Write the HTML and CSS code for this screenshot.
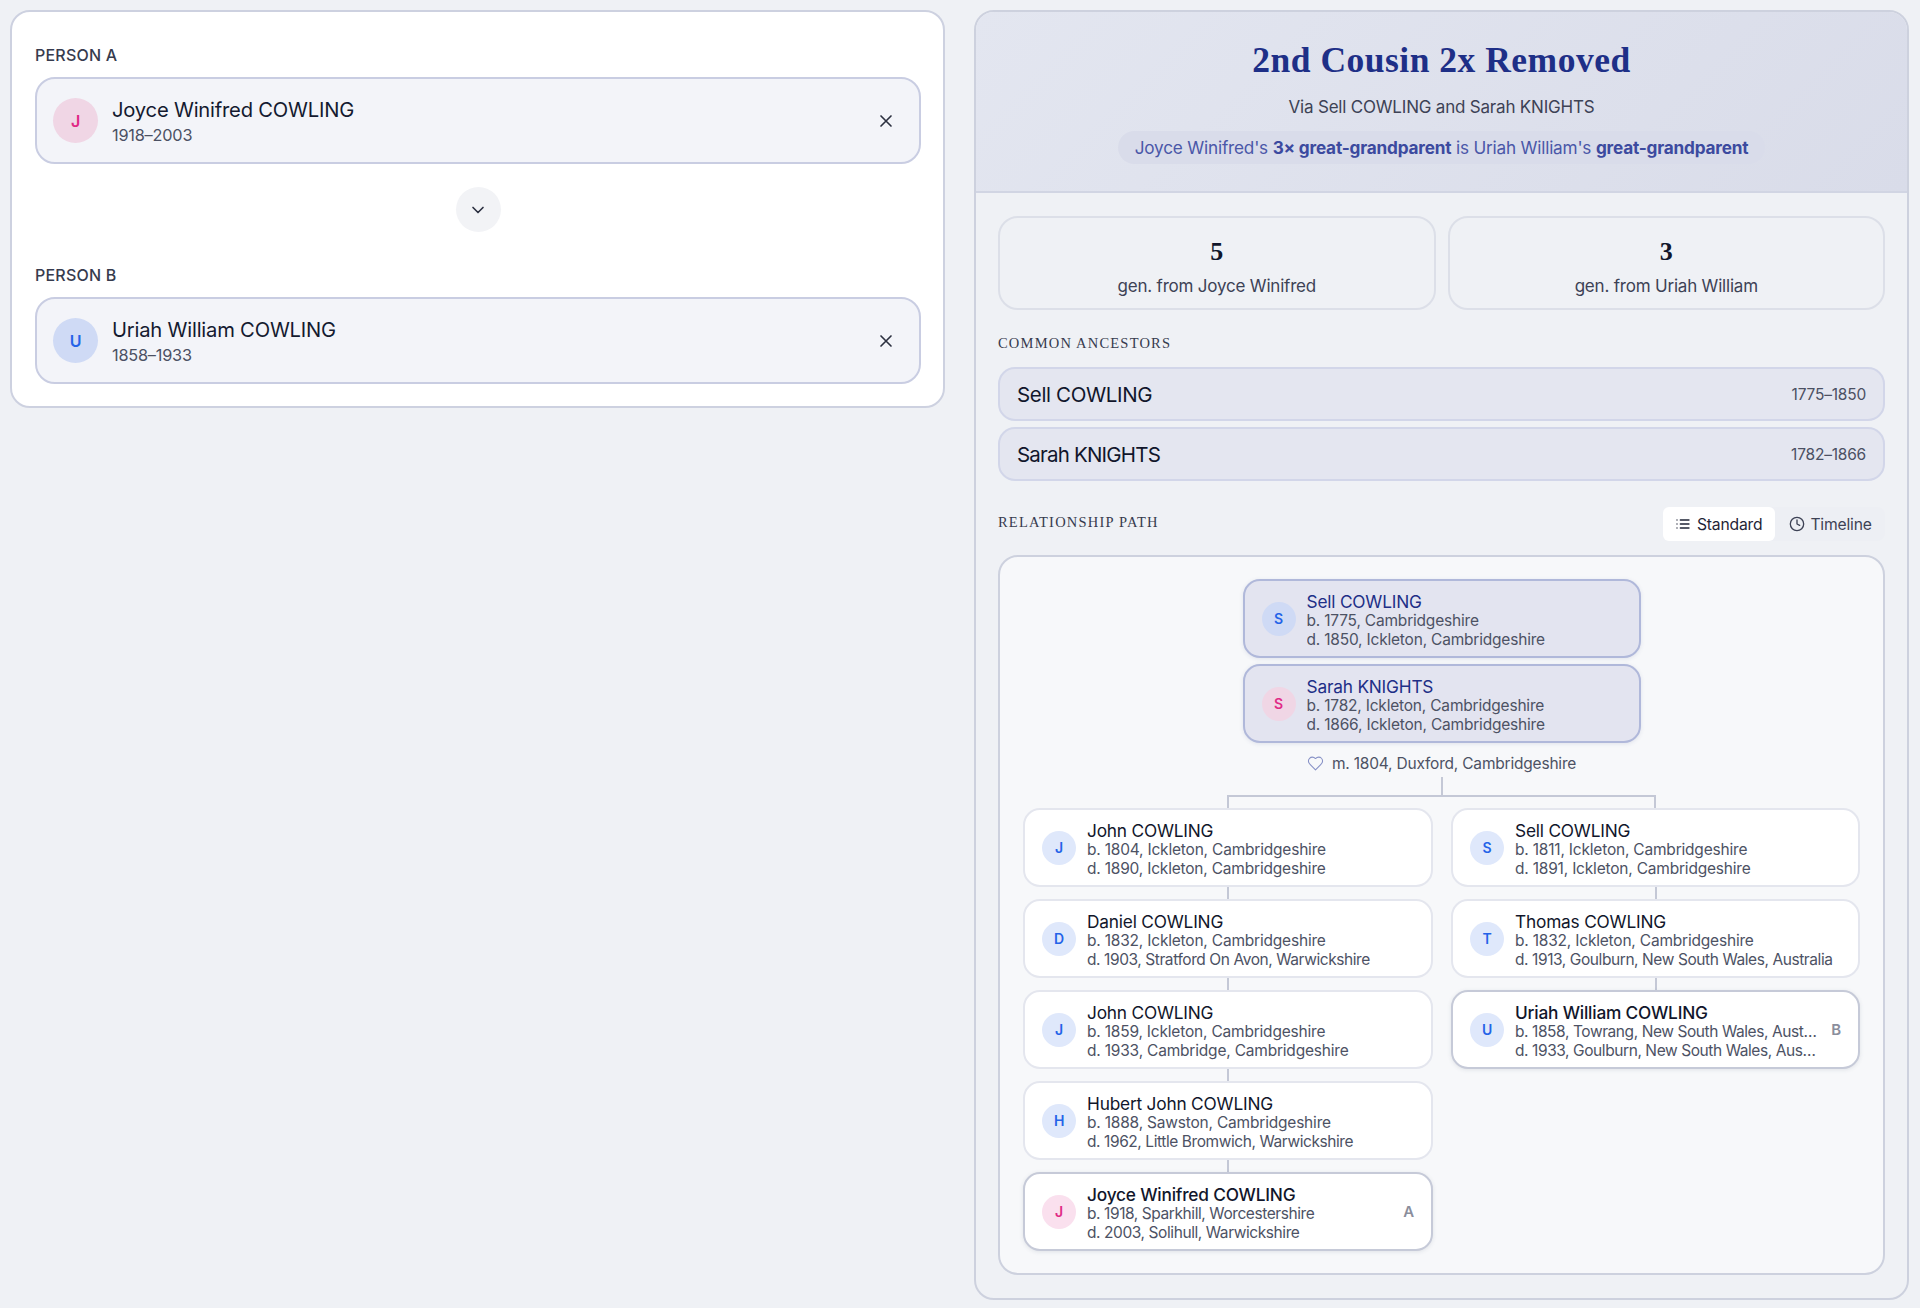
FILE: index.html
```html
<!DOCTYPE html>
<html lang="en">
  <head>
    <meta charset="UTF-8" />
    <meta name="viewport" content="width=device-width, initial-scale=1.0" />
    <title>Relationship Finder</title>
    <link rel="stylesheet" href="styles.css">
  </head>
  <body>
    <div class="layout">
      <section class="picker">
        <div class="field-label">PERSON A</div>
        <div class="person-box">
          <div class="avatar avatar-lg pink">J</div>
          <div class="person-text">
            <div class="person-name">Joyce Winifred COWLING</div>
            <div class="person-dates">1918–2003</div>
          </div>
          <svg class="clear-icon" viewBox="0 0 24 24"><path d="M18 6 6 18M6 6l12 12" /></svg>
        </div>

        <div class="swap-row">
          <div class="swap-btn">
            <svg viewBox="0 0 24 24"><path d="m6 9 6 6 6-6" /></svg>
          </div>
        </div>

        <div class="field-label">PERSON B</div>
        <div class="person-box">
          <div class="avatar avatar-lg blue">U</div>
          <div class="person-text">
            <div class="person-name">Uriah William COWLING</div>
            <div class="person-dates">1858–1933</div>
          </div>
          <svg class="clear-icon" viewBox="0 0 24 24"><path d="M18 6 6 18M6 6l12 12" /></svg>
        </div>
      </section>

      <section class="result">
        <header class="result-head">
          <h1>2nd Cousin 2x Removed</h1>
          <p class="via">Via Sell COWLING and Sarah KNIGHTS</p>
          <p class="pill">Joyce Winifred's <b>3× great-grandparent</b> is Uriah William's <b>great-grandparent</b></p>
        </header>

        <div class="result-body">
          <div class="stats">
            <div class="stat">
              <div class="stat-num">5</div>
              <div class="stat-label">gen. from Joyce Winifred</div>
            </div>
            <div class="stat">
              <div class="stat-num">3</div>
              <div class="stat-label">gen. from Uriah William</div>
            </div>
          </div>

          <h2 class="section-title">COMMON ANCESTORS</h2>
          <div class="ancestors">
            <div class="ancestor"><span class="ancestor-name">Sell COWLING</span><span class="ancestor-dates">1775–1850</span></div>
            <div class="ancestor"><span class="ancestor-name tight">Sarah KNIGHTS</span><span class="ancestor-dates">1782–1866</span></div>
          </div>

          <div class="path-head">
            <h2 class="section-title">RELATIONSHIP PATH</h2>
            <div class="toggle">
              <div class="toggle-btn active">
                <svg viewBox="0 0 24 24"><path d="M3 6h.01M3 12h.01M3 18h.01M8 6h13M8 12h13M8 18h13" /></svg>
                Standard
              </div>
              <div class="toggle-btn">
                <svg viewBox="0 0 24 24"><circle cx="12" cy="12" r="10" /><path d="M12 6v6l4 2" /></svg>
                Timeline
              </div>
            </div>
          </div>

          <div class="tree">
            <div class="couple">
              <div class="node root">
                <div class="avatar blue">S</div>
                <div class="node-text">
                  <div class="node-name">Sell COWLING</div>
                  <div class="node-line">b. 1775, Cambridgeshire</div>
                  <div class="node-line">d. 1850, Ickleton, Cambridgeshire</div>
                </div>
              </div>
              <div class="node root">
                <div class="avatar pink">S</div>
                <div class="node-text">
                  <div class="node-name">Sarah KNIGHTS</div>
                  <div class="node-line">b. 1782, Ickleton, Cambridgeshire</div>
                  <div class="node-line">d. 1866, Ickleton, Cambridgeshire</div>
                </div>
              </div>
              <div class="marriage">
                <svg viewBox="0 0 24 24"><path d="M19 14c1.500-1.500 3-3.200 3-5.500A5.500 5.500 0 0 0 16.500 3c-1.800 0-3 .5-4.500 2-1.500-1.500-2.700-2-4.500-2A5.500 5.500 0 0 0 2 8.500c0 2.300 1.500 4 3 5.500l7 7Z" /></svg>
                m. 1804, Duxford, Cambridgeshire
              </div>
            </div>

            <div class="stem"></div>
            <div class="fork"></div>

            <div class="branches">
              <div class="branch">
                <div class="node">
                  <div class="avatar blue-soft">J</div>
                  <div class="node-text">
                    <div class="node-name">John COWLING</div>
                    <div class="node-line">b. 1804, Ickleton, Cambridgeshire</div>
                    <div class="node-line">d. 1890, Ickleton, Cambridgeshire</div>
                  </div>
                </div>
                <div class="link"></div>
                <div class="node">
                  <div class="avatar blue-soft">D</div>
                  <div class="node-text">
                    <div class="node-name">Daniel COWLING</div>
                    <div class="node-line">b. 1832, Ickleton, Cambridgeshire</div>
                    <div class="node-line tight">d. 1903, Stratford On Avon, Warwickshire</div>
                  </div>
                </div>
                <div class="link"></div>
                <div class="node">
                  <div class="avatar blue-soft">J</div>
                  <div class="node-text">
                    <div class="node-name">John COWLING</div>
                    <div class="node-line">b. 1859, Ickleton, Cambridgeshire</div>
                    <div class="node-line">d. 1933, Cambridge, Cambridgeshire</div>
                  </div>
                </div>
                <div class="link"></div>
                <div class="node">
                  <div class="avatar blue-soft">H</div>
                  <div class="node-text">
                    <div class="node-name">Hubert John COWLING</div>
                    <div class="node-line">b. 1888, Sawston, Cambridgeshire</div>
                    <div class="node-line tight">d. 1962, Little Bromwich, Warwickshire</div>
                  </div>
                </div>
                <div class="link"></div>
                <div class="node endpoint">
                  <div class="avatar pink-soft">J</div>
                  <div class="node-text">
                    <div class="node-name">Joyce Winifred COWLING</div>
                    <div class="node-line tight">b. 1918, Sparkhill, Worcestershire</div>
                    <div class="node-line tight">d. 2003, Solihull, Warwickshire</div>
                  </div>
                  <div class="node-tag">A</div>
                </div>
              </div>

              <div class="branch">
                <div class="node">
                  <div class="avatar blue-soft">S</div>
                  <div class="node-text">
                    <div class="node-name">Sell COWLING</div>
                    <div class="node-line">b. 1811, Ickleton, Cambridgeshire</div>
                    <div class="node-line">d. 1891, Ickleton, Cambridgeshire</div>
                  </div>
                </div>
                <div class="link"></div>
                <div class="node">
                  <div class="avatar blue-soft">T</div>
                  <div class="node-text">
                    <div class="node-name">Thomas COWLING</div>
                    <div class="node-line">b. 1832, Ickleton, Cambridgeshire</div>
                    <div class="node-line tight">d. 1913, Goulburn, New South Wales, Australia</div>
                  </div>
                </div>
                <div class="link"></div>
                <div class="node endpoint">
                  <div class="avatar blue-soft">U</div>
                  <div class="node-text">
                    <div class="node-name">Uriah William COWLING</div>
                    <div class="node-line tight">b. 1858, Towrang, New South Wales, Australia</div>
                    <div class="node-line tight">d. 1933, Goulburn, New South Wales, Australia</div>
                  </div>
                  <div class="node-tag">B</div>
                </div>
              </div>
            </div>
          </div>
        </div>
      </section>
    </div>
  </body>
</html>
```

FILE: styles.css
```css
* {
  box-sizing: border-box;
  margin: 0;
}

body {
  background-color: #eff1f5;
  color: #11162b;
  font-family: Inter, "Liberation Sans", sans-serif;
  letter-spacing: -0.2px;
}

svg {
  fill: none;
  stroke: currentColor;
  stroke-width: 2;
  stroke-linecap: round;
  stroke-linejoin: round;
}

.layout {
  display: flex;
  align-items: flex-start;
  gap: 29px;
  padding: 10px 11px 8px 10px;
}

/* left column */
.picker {
  width: 935px;
  height: 398px;
  background-color: #fff;
  border: 2px solid #cdd1e0;
  border-radius: 20px;
  padding: 33px 22px 0 23px;
}

.field-label {
  font-size: 16px;
  line-height: 20px;
  font-weight: 500;
  letter-spacing: 0.2px;
  color: #363b4e;
  margin-bottom: 12px;
}

.person-box {
  display: flex;
  align-items: center;
  height: 87px;
  padding: 0 23px 0 16px;
  background-color: #f3f4f9;
  border: 2px solid #c9cde2;
  border-radius: 20px;
}

.person-text {
  flex: 1;
  margin-left: 14px;
  padding-top: 2px;
}

.person-name {
  font-size: 20.200px;
  line-height: 27px;
  color: #141a30;
}

.person-dates {
  font-size: 16.300px;
  line-height: 25px;
  color: #4b5063;
}

.clear-icon {
  width: 20px;
  height: 20px;
  color: #2c3040;
}

.swap-row {
  display: flex;
  justify-content: center;
  margin: 23px 0 33px;
}

.swap-btn {
  width: 45px;
  height: 45px;
  border-radius: 50%;
  background-color: #f2f3f6;
  color: #2c3040;
  display: flex;
  align-items: center;
  justify-content: center;
}

.swap-btn svg {
  width: 20px;
  height: 20px;
}

/* avatars */
.avatar {
  flex: none;
  width: 34px;
  height: 34px;
  border-radius: 50%;
  display: flex;
  align-items: center;
  justify-content: center;
  font-size: 14px;
  font-weight: 600;
}

.avatar-lg {
  width: 45px;
  height: 45px;
  font-size: 16px;
}

.pink {
  background-color: #f0d6e5;
  color: #e02a85;
}

.blue {
  background-color: #cfdaf5;
  color: #2463e8;
}

.pink-soft {
  background-color: #fae0ee;
  color: #e02a85;
}

.blue-soft {
  background-color: #dfe8fb;
  color: #2463e8;
}

/* right column */
.result {
  width: 935px;
  height: 1290px;
  border: 2px solid #cdd1de;
  border-radius: 20px;
  overflow: hidden;
}

.result-head {
  height: 181px;
  padding-top: 24px;
  text-align: center;
  background: linear-gradient(135deg, #e3e6f0, #d9dce9);
  border-bottom: 2px solid #d1d5e3;
}

.result-head h1 {
  font-family: "Liberation Serif", serif;
  font-size: 35.500px;
  line-height: 48px;
  font-weight: 700;
  letter-spacing: 0.5px;
  color: #1e2f87;
}

.via {
  margin-top: 11px;
  font-size: 17px;
  line-height: 24px;
  color: #3d4255;
}

.pill {
  display: inline-block;
  margin-top: 12px;
  height: 33px;
  padding: 0 17px;
  border-radius: 17px;
  background-color: #d9dcea;
  font-size: 17.200px;
  line-height: 34px;
  color: #4a57a8;
}

.pill b {
  font-weight: 700;
  color: #3c4a9f;
}

.result-body {
  padding: 23px 22px 0;
}

.stats {
  display: grid;
  grid-template-columns: 1fr 1fr;
  gap: 12px;
}

.stat {
  height: 94px;
  padding-top: 18px;
  text-align: center;
  border: 2px solid #dcdfe8;
  border-radius: 20px;
}

.stat-num {
  font-family: "Liberation Serif", serif;
  font-size: 26px;
  line-height: 32px;
  font-weight: 700;
}

.stat-label {
  margin-top: 6px;
  font-size: 17px;
  line-height: 24px;
  color: #3d4255;
}

.section-title {
  font-family: "Liberation Serif", serif;
  font-size: 14.500px;
  font-weight: 400;
  letter-spacing: 1.200px;
  color: #363b4e;
}

.result-body > .section-title {
  margin-top: 24px;
  line-height: 18px;
}

.ancestors {
  display: flex;
  flex-direction: column;
  gap: 6px;
  margin-top: 15px;
}

.ancestor {
  display: flex;
  justify-content: space-between;
  align-items: center;
  height: 54px;
  padding: 0 17px;
  background-color: #e4e6f0;
  border: 2px solid #d2d6e9;
  border-radius: 17px;
}

.ancestor-name {
  font-size: 20.500px;
  letter-spacing: -0.35px;
}

.ancestor-name.tight {
  letter-spacing: -0.8px;
}

.ancestor-dates {
  font-size: 15.500px;
  color: #4b5063;
}

.path-head {
  display: flex;
  justify-content: space-between;
  align-items: center;
  margin-top: 26px;
}

.path-head .section-title {
  margin-bottom: 4px;
}

.toggle {
  display: flex;
  gap: 2px;
  width: 222px;
  border-radius: 8px;
  background-color: #edeff4;
}

.toggle-btn {
  display: flex;
  align-items: center;
  gap: 5px;
  height: 34px;
  padding: 0 11px 0 12px;
  font-size: 15.700px;
  color: #3d4255;
  border-radius: 6px;
}

.toggle-btn.active {
  gap: 6px;
  padding-right: 13px;
  background-color: #fff;
  color: #1f2436;
}

.toggle-btn svg {
  width: 16px;
  height: 16px;
}

.tree {
  height: 720px;
  margin-top: 14px;
  padding: 22px 23px 0;
  background-color: #f7f8fa;
  border: 2px solid #cdd1de;
  border-radius: 20px;
}

.couple {
  width: 398px;
  margin: 0 auto;
  display: flex;
  flex-direction: column;
  gap: 6px;
}

.node {
  display: flex;
  align-items: center;
  height: 79px;
  padding: 0 8px 0 17px;
  background-color: #fff;
  border: 2px solid #e4e6ee;
  border-radius: 17px;
}

.node.root {
  background-color: #e3e4f0;
  border-color: #b0b8da;
  box-shadow: 0 1px 4px rgba(60, 70, 130, 0.12);
}

.node.endpoint {
  padding-right: 17px;
  border-color: #c6cad8;
  box-shadow: 0 1px 4px rgba(60, 70, 100, 0.12);
}

.node-text {
  flex: 1;
  min-width: 0;
  margin-left: 11px;
  padding-top: 3px;
}

.node-name {
  font-size: 17.300px;
  line-height: 21px;
  color: #11162b;
}

.endpoint .node-name {
  font-weight: 500;
}

.root .node-name {
  color: #1e2f87;
}

.node-line {
  font-size: 15.500px;
  line-height: 18.500px;
  color: #4d5264;
  white-space: nowrap;
  overflow: hidden;
  text-overflow: ellipsis;
}

.node-line.tight {
  letter-spacing: -0.42px;
}

.node-tag {
  flex: none;
  margin-left: 14px;
  font-size: 15px;
  font-weight: 600;
  color: #8a8e9c;
}

.marriage {
  display: flex;
  align-items: center;
  justify-content: center;
  gap: 8px;
  height: 26px;
  margin-top: 1px;
  font-size: 15.500px;
  color: #4d5264;
}

.marriage svg {
  width: 17px;
  height: 17px;
  stroke-width: 1.500;
  color: #8791c6;
}

.stem {
  width: 2px;
  height: 18px;
  margin: 1px auto 0;
  background-color: #c4c8d6;
}

.fork {
  width: 429px;
  height: 13px;
  margin: 0 auto;
  border: 2px solid #c4c8d6;
  border-bottom: 0;
}

.branches {
  display: grid;
  grid-template-columns: 410px 409px;
  gap: 18px;
}

.branch {
  display: flex;
  flex-direction: column;
  align-items: stretch;
}

.link {
  width: 2px;
  height: 12px;
  align-self: center;
  background-color: #c4c8d6;
}
```
